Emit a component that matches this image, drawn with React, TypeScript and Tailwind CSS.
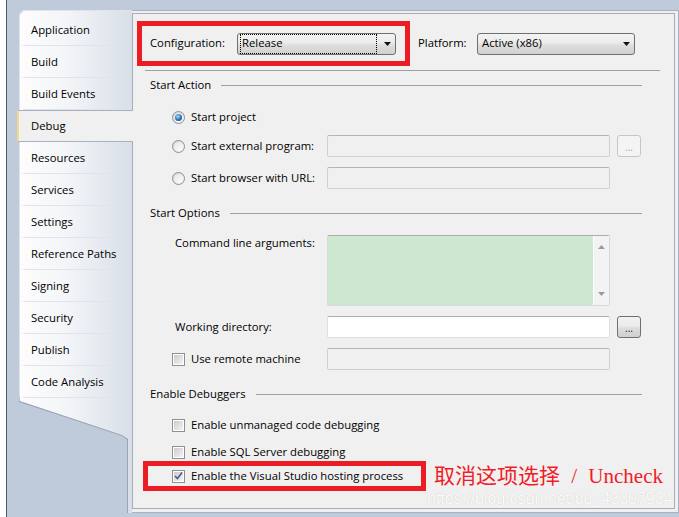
import React from "react";

const TABS = [
  "Application",
  "Build",
  "Build Events",
  "Debug",
  "Resources",
  "Services",
  "Settings",
  "Reference Paths",
  "Signing",
  "Security",
  "Publish",
  "Code Analysis",
];

function Radio({ checked }: { checked?: boolean }) {
  return (
    <span className="flex h-[13px] w-[13px] shrink-0 items-center justify-center rounded-full border border-[#8e8f8f] bg-[linear-gradient(135deg,#cfd0d1,#f9f9f9)]">
      <span className="flex h-[9px] w-[9px] items-center justify-center rounded-full bg-[linear-gradient(135deg,#e2e2e2,#ffffff)]">
        {checked && (
          <span className="h-[7px] w-[7px] rounded-full bg-[radial-gradient(circle_at_40%_35%,#a8dcff,#2a6fb8_55%,#0f3c74)]" />
        )}
      </span>
    </span>
  );
}

function Checkbox({ checked }: { checked?: boolean }) {
  return (
    <span className="flex h-[13px] w-[13px] shrink-0 items-center justify-center border border-[#8e8f8f] bg-white">
      <span className="relative h-[9px] w-[9px] bg-[linear-gradient(135deg,#cbcbcb,#f4f4f4)]">
        {checked && (
          <svg className="absolute -left-px -top-[2px]" width="11" height="11" viewBox="0 0 11 11">
            <path d="M2 6 L4.5 8.5 L9 2.5" fill="none" stroke="#4a5d8e" strokeWidth="1.6" />
          </svg>
        )}
      </span>
    </span>
  );
}

function Combo({ value, width, focused }: { value: string; width: string; focused?: boolean }) {
  return (
    <div
      className={`${width} flex h-[22px] items-stretch rounded-[3px] border border-[#707070] bg-[linear-gradient(#f3f3f3,#ebebeb_45%,#dedede_55%,#d0d0d0)] pl-[2px] pr-[4px]`}
    >
      <span
        className={
          focused
            ? "flex flex-1 items-center border border-dotted border-black pl-[1px]"
            : "flex flex-1 items-center border border-transparent pl-[1px]"
        }
      >
        {value}
      </span>
      <span className="flex items-center pl-[7px]">
        <svg width="7" height="4" viewBox="0 0 7 4">
          <path d="M0 0h7L3.5 4z" fill="#111" />
        </svg>
      </span>
    </div>
  );
}

function TextBox({ tone, height }: { tone: "disabled" | "white"; height: string }) {
  return (
    <div
      className={
        tone === "white"
          ? `${height} w-[283px] rounded-[2px] border border-[#dbdfe6] border-t-[#abadb3] bg-white`
          : `${height} w-[283px] rounded-[2px] border border-[#cfcfcf] border-t-[#b5b5b5] bg-[#f0f0f0]`
      }
    />
  );
}

function Browse({ active }: { active?: boolean }) {
  return active ? (
    <div className="ml-[7px] flex h-[22px] w-[24px] items-end justify-center rounded-[3px] border border-[#707070] bg-[linear-gradient(#f2f2f2,#ebebeb_45%,#dddddd_55%,#cfcfcf)] pb-[4px] text-[10px] leading-none text-[#222]">
      ...
    </div>
  ) : (
    <div className="ml-[7px] flex h-[22px] w-[24px] items-end justify-center rounded-[3px] border border-[#c6c6c6] bg-[#f4f4f4] pb-[4px] text-[10px] leading-none text-[#a8a8a8]">
      ...
    </div>
  );
}

function GroupHeader({ title, spacing }: { title: string; spacing: string }) {
  return (
    <div className={`${spacing} flex h-[16px] items-center pl-[17px]`}>
      <span>{title}</span>
      <span className="ml-[10px] mr-[32px] h-px flex-1 bg-[#a0a0a0]" />
    </div>
  );
}

function TabStrip() {
  return (
    <div className="relative mt-[10px] h-[503px] w-[113px] shrink-0">
      <div className="absolute inset-0 bg-[linear-gradient(#dfe4eb_0,#dfe4eb_385px,#9aa6b7_392px)] [clip-path:polygon(0_4px,4px_0,100%_0,100%_100%,108px_100%,108px_430px,103px_426px,0_392px)]" />
      <div className="absolute inset-0 bg-[linear-gradient(90deg,#fdfdfd,#f2f4f7_45%,#d9dfe8)] [clip-path:polygon(1px_5px,5px_1px,100%_1px,100%_100%,109px_100%,109px_429px,103px_425px,1px_391px)]" />
      <div className="relative flex flex-col pt-[4px]">
        {TABS.map((t) =>
          t === "Debug" ? (
            <div
              key={t}
              className="relative z-10 -ml-[2px] flex h-[32px] w-[116px] items-center border-y border-l-[2px] border-[#a7b1bf] border-l-[#f5d98e] bg-[#f0f0f0] pl-[12px]"
            >
              {t}
            </div>
          ) : (
            <div
              key={t}
              className="flex h-[32px] items-center bg-[linear-gradient(#e0e4ea,#e0e4ea)] bg-[length:95px_1px] bg-[position:4px_100%] bg-no-repeat pl-[12px]"
            >
              {t}
            </div>
          ),
        )}
      </div>
    </div>
  );
}

function Panel() {
  return (
    <div className="relative flex h-[496px] flex-col border border-[#a4aebc] bg-[#f0f0f0]">
      {/* Configuration / Platform */}
      <div className="ml-[4px] mt-[7px] flex items-center">
        <div className="flex h-[45px] w-[273px] items-center border-[5px] border-[#ec1c24] pl-[8px]">
          <span className="w-[87px]">Configuration:</span>
          <Combo value="Release" width="w-[159px]" focused />
        </div>
        <span className="ml-[8px] w-[59px]">Platform:</span>
        <Combo value="Active (x86)" width="w-[158px]" />
      </div>
      <div className="ml-[12px] mt-[4px] h-px w-[515px] bg-[#a0a0a0]" />

      {/* Start Action */}
      <GroupHeader title="Start Action" spacing="mt-[6px]" />
      <div className="mt-[13px] flex h-[22px] items-center pl-[39px]">
        <Radio checked />
        <span className="ml-[6px]">Start project</span>
      </div>
      <div className="mt-[7px] flex items-center pl-[39px]">
        <div className="flex w-[155px] items-center">
          <Radio />
          <span className="ml-[6px]">Start external program:</span>
        </div>
        <TextBox tone="disabled" height="h-[22px]" />
        <Browse />
      </div>
      <div className="mt-[10px] flex items-center pl-[39px]">
        <div className="flex w-[155px] items-center">
          <Radio />
          <span className="ml-[6px]">Start browser with URL:</span>
        </div>
        <TextBox tone="disabled" height="h-[22px]" />
      </div>

      {/* Start Options */}
      <GroupHeader title="Start Options" spacing="mt-[16px]" />
      <div className="mt-[14px] flex items-start pl-[42px]">
        <span className="w-[152px] leading-[16px]">Command line arguments:</span>
        <div className="flex h-[71px] w-[283px] rounded-[2px] border border-[#d5d9e0] border-t-[#abadb3] bg-[#cde8cf]">
          <div className="flex-1" />
          <div className="flex w-[16px] flex-col items-center justify-between border-l border-white bg-[#f3f3f3] py-[9px]">
            <svg width="7" height="4" viewBox="0 0 7 4">
              <path d="M3.5 0L7 4H0z" fill="#9a9a9a" />
            </svg>
            <svg width="7" height="4" viewBox="0 0 7 4">
              <path d="M0 0h7L3.5 4z" fill="#9a9a9a" />
            </svg>
          </div>
        </div>
      </div>
      <div className="mt-[10px] flex items-center pl-[42px]">
        <span className="w-[152px]">Working directory:</span>
        <TextBox tone="white" height="h-[22px]" />
        <Browse active />
      </div>
      <div className="mt-[10px] flex items-center pl-[39px]">
        <div className="flex w-[155px] items-center">
          <Checkbox />
          <span className="ml-[6px]">Use remote machine</span>
        </div>
        <TextBox tone="disabled" height="h-[22px]" />
      </div>

      {/* Enable Debuggers */}
      <GroupHeader title="Enable Debuggers" spacing="mt-[16px]" />
      <div className="mt-[13px] flex h-[20px] items-center pl-[39px]">
        <Checkbox />
        <span className="ml-[6px]">Enable unmanaged code debugging</span>
      </div>
      <div className="mt-[7px] flex h-[20px] items-center pl-[39px]">
        <Checkbox />
        <span className="ml-[6px]">Enable SQL Server debugging</span>
      </div>
      <div className="-mt-px ml-[10px] flex items-center">
        <div className="flex h-[30px] w-[283px] items-center border-[5px] border-[#ec1c24] pl-[24px]">
          <Checkbox checked />
          <span className="ml-[6px]">Enable the Visual Studio hosting process</span>
        </div>
        <span className="ml-[8px] font-['Liberation_Serif','Noto_Sans_CJK_SC',serif] text-[21px] leading-none text-[#f01c28] [word-spacing:6px]">
          取消这项选择 / Uncheck
        </span>
      </div>

      {/* blog watermark */}
      <span className="absolute left-[294px] top-[476px] font-['Liberation_Sans',sans-serif] text-[16px] leading-[18px] text-[#fbfbfb] [text-shadow:0_0_1px_#c4c4c4]">
        https://blog.csdn.net/qq_43307934
      </span>
    </div>
  );
}

export default function App() {
  return (
    <div className="flex h-[517px] w-[679px] overflow-hidden bg-[#bfcadb] font-['Open_Sans',sans-serif] text-[11.3px] text-black">
      <div className="w-[6px] shrink-0 bg-white" />
      <div className="w-px shrink-0 bg-[#4a5872]" />
      <div className="flex flex-1 pl-[12px]">
        <TabStrip />
        <div className="mt-[10px] flex h-[503px] flex-1 flex-col border-y border-r border-[#a9b2bf] bg-[#f0f0f0] pr-[3px] pt-[2px]">
          <Panel />
        </div>
      </div>
    </div>
  );
}
